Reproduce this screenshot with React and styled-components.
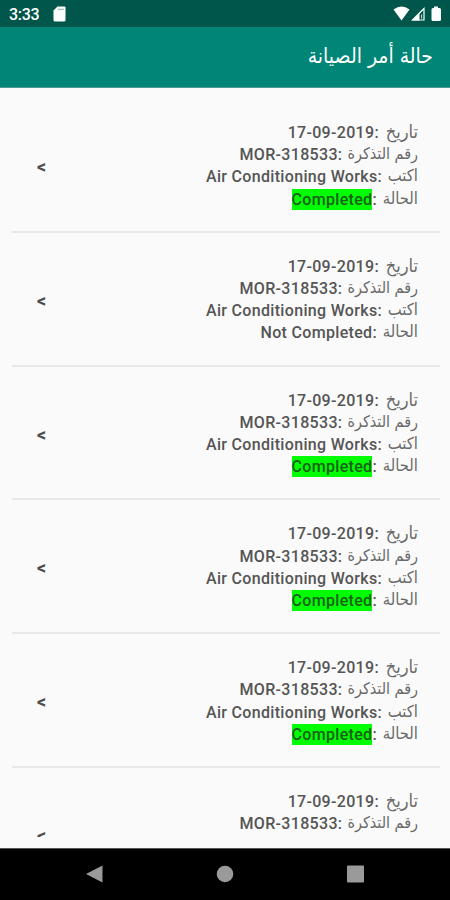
import React from 'react'
import styled, { createGlobalStyle } from 'styled-components';

const GlobalStyle = createGlobalStyle`
  * {
    box-sizing: border-box;
  }
  body {
    margin: 0;
    background: #fafafa;
    font-family: Roboto, "DejaVu Sans", sans-serif;
  }
`;

const Screen = styled.div`
  display: flex;
  flex-direction: column;
  width: 450px;
  height: 900px;
  overflow: hidden;
  background: #fafafa;
`;

const StatusBar = styled.div`
  display: flex;
  align-items: center;
  flex: none;
  height: 27px;
  padding: 0 7px 0 9px;
  background: #00564b;
  color: #fff;
`;

const Clock = styled.span`
  width: 44px;
  font-size: 16px;
  font-weight: 500;
  line-height: 27px;
  letter-spacing: -0.3px;
  padding-top: 1px;
`;

const StatusIcons = styled.div`
  display: flex;
  margin-left: auto;
`;

const AppBar = styled.header`
  display: flex;
  align-items: center;
  flex: none;
  height: 61px;
  padding: 0 17px 2px;
  background: #008577;
  border-bottom: 1px solid #4b9c93;
`;

const Title = styled.h1`
  margin: 0;
  color: #fff;
  font-family: "DejaVu Sans", sans-serif;
  font-stretch: condensed;
  font-size: 21px;
  font-weight: 400;
  line-height: 30px;
  white-space: nowrap;
`;

const List = styled.div`
  flex: none;
  height: 749px;
  margin: 0 10px 0 12px;
  padding-top: 11px;
  overflow: hidden;
`;

const Order = styled.div`
  display: flex;
  align-items: flex-start;
  justify-content: space-between;
  height: 133.8px;
  padding: 23px 22px 0 25px;
  border-bottom: 2px solid #e8e8e8;
`;

const Arrow = styled.span`
  color: #4c4c4c;
  font-size: 18px;
  font-weight: 700;
  line-height: 22px;
  margin-top: 34px;
`;

const Details = styled.div`
  display: flex;
  flex-direction: column;
`;

const Line = styled.div`
  display: flex;
  gap: 5px;
  height: 22.2px;
  line-height: 22px;
  white-space: nowrap;
`;

const Label = styled.span`
  min-width: ${(props) => props.$width}px;
  color: #6a6a6a;
  font-family: "DejaVu Sans", sans-serif;
  font-stretch: condensed;
  font-size: ${(props) => props.$size || 16}px;
  line-height: 19px;
`;

const Value = styled.span`
  color: #555;
  font-size: 16px;
  font-weight: 500;
  letter-spacing: 0.32px;
`;

const Status = styled.span`
  display: inline-block;
  height: 21px;
  line-height: 22px;
  color: ${(props) => (props.$done ? '#1c5c1c' : 'inherit')};
  background: ${(props) => (props.$done ? '#00ff00' : 'transparent')};
`;

const Footer = styled.nav`
  display: flex;
  align-items: center;
  justify-content: space-between;
  flex: none;
  height: 52px;
  margin-top: auto;
  padding: 0 85px 2px;
  background: #000;
  border-top: 1px solid #555;
`;

const orders = [
    { done: true },
    { done: false },
    { done: true },
    { done: true },
    { done: true },
    { done: true },
];

function OrderRow({ done }) {
    return (
        <Order>
            <Arrow>&lt;</Arrow>
            <Details dir="rtl">
                <Line>
                    <Label $width={34} $size={18}>تاريخ</Label>
                    <Value dir="ltr">17-09-2019:</Value>
                </Line>
                <Line>
                    <Label $width={70.5}>رقم التذكرة</Label>
                    <Value dir="ltr">MOR-318533:</Value>
                </Line>
                <Line>
                    <Label $width={31} $size={16.5}>اكتب</Label>
                    <Value dir="ltr">Air Conditioning Works:</Value>
                </Line>
                <Line>
                    <Label $width={36} $size={16.5}>الحالة</Label>
                    <Value dir="ltr"><Status $done={done}>{done ? 'Completed' : 'Not Completed'}</Status>:</Value>
                </Line>
            </Details>
        </Order>
    )
}

function App() {
    return (
        <Screen>
            <GlobalStyle />
            <StatusBar>
                <Clock>3:33</Clock>
                <svg width="13" height="16" viewBox="0 0 13 16">
                    <path d="M4.5 0.5H11.5Q12.5 0.5 12.5 1.5V14Q12.5 15.5 11 15.5H2Q0.5 15.5 0.5 14V4.5Z" fill="#fff" />
                    <path d="M4.5 3.4H11" stroke="#a9c4bf" strokeWidth="1.4" />
                </svg>
                <StatusIcons>
                    <svg width="50" height="16" viewBox="0 0 50 16">
                        <path d="M0.5 3.5Q8.5 -2.5 16.5 3.5L8.5 14.5Z" fill="#fff" />
                        <path d="M19.5 14L31 2.5V14Z" fill="none" stroke="#fff" strokeWidth="1.2" />
                        <path d="M19 14.5L26.5 7V14.5Z" fill="#fff" />
                        <path d="M28.6 12.5V8.5" stroke="#fff" strokeWidth="0.8" />
                        <path d="M41 0.5H45V2H46.5Q48 2 48 3.5V13.5Q48 15 46.5 15H40Q38.5 15 38.5 13.5V3.5Q38.5 2 40 2H41Z" fill="#fff" />
                    </svg>
                </StatusIcons>
            </StatusBar>
            <AppBar dir="rtl">
                <Title>حالة أمر الصيانة</Title>
            </AppBar>
            <List>
                {orders.map((order, index) => (
                    <OrderRow key={index} done={order.done} />
                ))}
            </List>
            <Footer>
                <svg width="18" height="20" viewBox="0 0 18 20">
                    <path d="M17.5 1.5V18.5L1 10Z" fill="#9a9a9a" />
                </svg>
                <svg width="18" height="18" viewBox="0 0 18 18">
                    <circle cx="9" cy="9" r="8.3" fill="#9a9a9a" />
                </svg>
                <svg width="19" height="18" viewBox="0 0 19 18">
                    <rect x="1" y="0.5" width="17" height="17" rx="1" fill="#9a9a9a" />
                </svg>
            </Footer>
        </Screen>
    )
}

export default App
